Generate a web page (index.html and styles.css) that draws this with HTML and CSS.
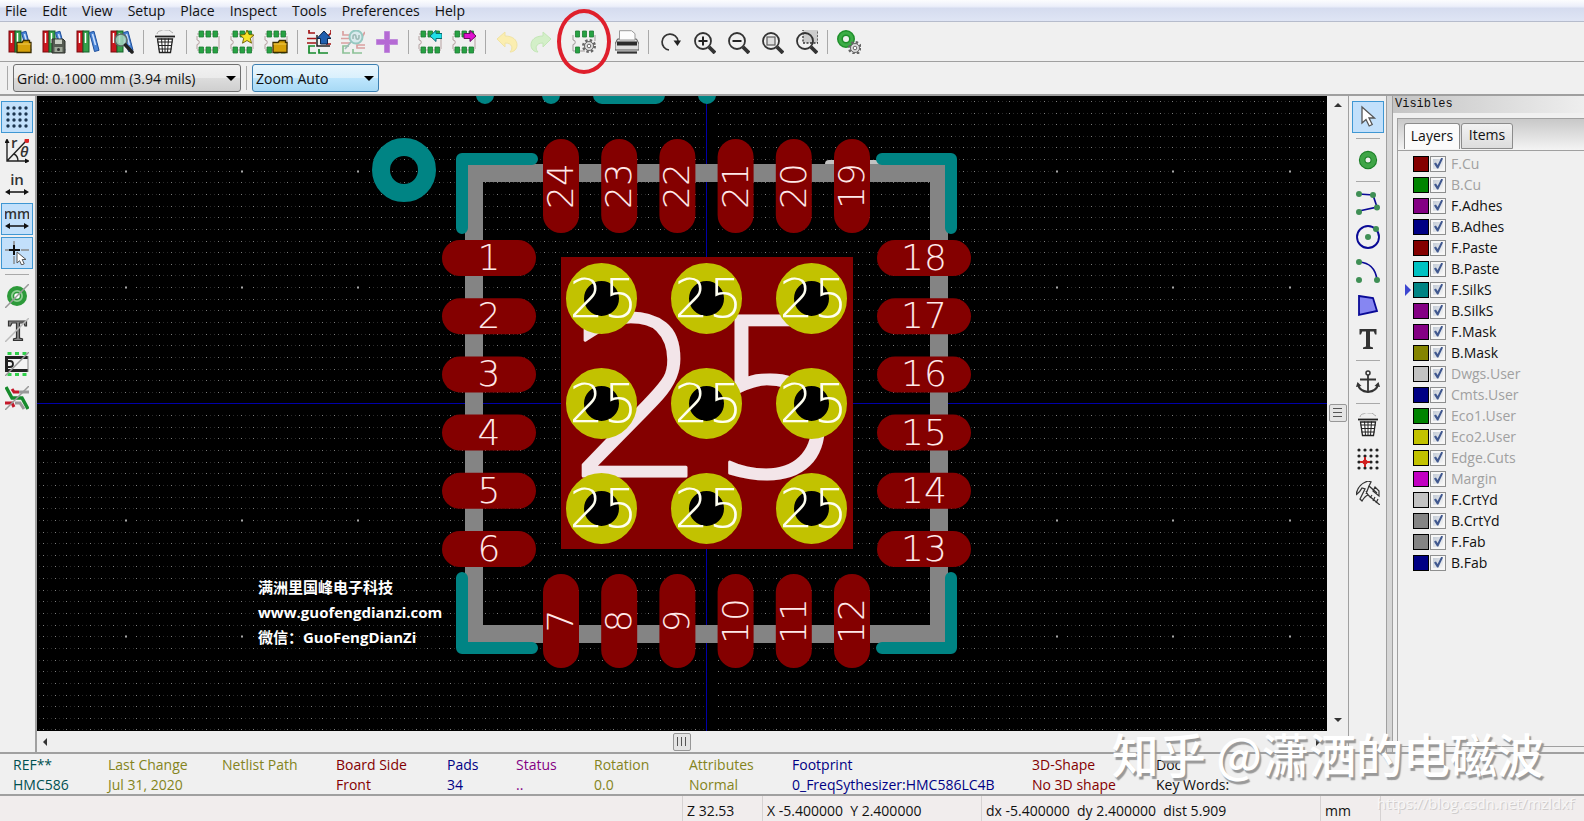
FILE: index.html
```
<!DOCTYPE html>
<html lang="en">
<head>
    <meta charset="UTF-8">
    <meta name="viewport" content="width=device-width, initial-scale=1.0">
    <title>Footprint Editor</title>
    <link rel="stylesheet" href="styles.css">
</head>
<body>
    <!-- Icon shapes -->
    <svg class="sprite" aria-hidden="true">
        <symbol id="books" viewBox="0 0 24 24">
            <rect x="1" y="1" width="6" height="21" fill="#c8171e" stroke="#7a0a0e"/>
            <rect x="7" y="1" width="6" height="21" fill="#35a04a" stroke="#14602a"/>
            <path d="M13.500 2.500l4.500-1.200 5 19-4.500 1.200z" fill="#4a86d8" stroke="#1f4f9c"/>
            <path d="M3.500 3v10M9.500 3v10" stroke="#fff" stroke-width="1.500"/>
            <path d="M16.500 4l3 11" stroke="#cfe2ff" stroke-width="1.500"/>
        </symbol>
        <symbol id="folder" viewBox="0 0 24 24">
            <path d="M9 12.500h5l1.500-2h6v2h1.500v10H9z" fill="#d6a10a" stroke="#3a2c00" stroke-width="1.300"/>
            <path d="M9.500 14h13" stroke="#f0cb55"/>
        </symbol>
        <symbol id="lib-open" viewBox="0 0 24 24"><use href="#books"/><use href="#folder"/></symbol>
        <symbol id="lib-save" viewBox="0 0 24 24">
            <use href="#books"/>
            <path d="M10 9h11l2 2v12H10z" fill="#555b52" stroke="#2c302a"/>
            <rect x="13" y="9.500" width="7" height="4.500" fill="#c9cfc4"/>
            <rect x="12.500" y="17" width="8" height="5" fill="#9fa89a"/>
            <circle cx="16.500" cy="19.500" r="1.500" fill="#333"/>
        </symbol>
        <symbol id="lib-view" viewBox="0 0 24 24">
            <use href="#books"/>
            <circle cx="11" cy="10" r="6" fill="#a5d5c2" fill-opacity=".85" stroke="#5c6b68" stroke-width="1.600"/>
            <path d="M15.500 15l6.500 7" stroke="#222" stroke-width="3.500" stroke-linecap="round"/>
        </symbol>
        <symbol id="trash" viewBox="0 0 24 24">
            <path d="M4 4c1-4 4-2.500 5-4 2-1 3 .5 5 0 3-.5 3 1.500 6 3" fill="none" stroke="#aaa"/>
            <path d="M2 6.500h20" stroke="#222" stroke-width="1.800"/>
            <path d="M4.500 9l2 13.500h11L19.500 9z" fill="#fff" stroke="#222" stroke-width="1.300"/>
            <path d="M8.500 8.500l1 14M12 8.500v14M15.500 8.500l-1 14M4.500 12h15M5 15.500h14M5.500 19h13" stroke="#222"/>
        </symbol>
        <symbol id="chip" viewBox="0 0 24 24">
            <path d="M1 6v4a2 2 0 0 1 0 4.500V19M23 6v13M1 4h22M1 20h22" fill="none" stroke="#b5a0a0"/>
            <path d="M3 1h4.500v6H3zM10 1h4.500v6H10zM17 1h4.500v6H17zM3 17h4.500v6H3zM10 17h4.500v6H10zM17 17h4.500v6H17z" fill="#27a243" stroke="#1d7c34" stroke-width=".8"/>
        </symbol>
        <symbol id="chip-new" viewBox="0 0 24 24">
            <use href="#chip"/>
            <path d="M17 0l2 4.500 5 .5-3.700 3.300 1.200 4.900L17 10.500l-4.500 2.700 1.200-4.900L10 5l5-.5z" fill="#f7e328" stroke="#6c6000" stroke-width=".9"/>
        </symbol>
        <symbol id="chip-open" viewBox="0 0 24 24"><use href="#chip"/><use href="#folder"/></symbol>
        <symbol id="netlist" viewBox="0 0 24 24">
            <path d="M2 -1v4h6M0 8.500h9M0 13h9M24 -1v4l-3 3M24 14h-5" fill="none" stroke="#a31515" stroke-width="1.700"/>
            <path d="M8 16H2v7h7M12 19v4h9" fill="none" stroke="#168a2c" stroke-width="1.700"/>
            <path d="M10 5v11h13" fill="none" stroke="#222" stroke-width="1.500"/>
            <path d="M17 1l7 7.500h-3.500V14h-7V8.500H10z" fill="#1f5fae" stroke="#0b2447"/>
        </symbol>
        <symbol id="netlist-dim" viewBox="0 0 24 24">
            <g opacity=".45">
                <path d="M2 1v4h6M0 8.500h9M0 13h9M24 2l-3 5M24 15h-8v3h8" fill="none" stroke="#c04040" stroke-width="1.700"/>
                <path d="M8 16H2v7h7M12 19v4h9" fill="none" stroke="#168a2c" stroke-width="1.700"/>
                <circle cx="15" cy="7" r="6.500" fill="#bfe3ea" stroke="#2a9a8a" stroke-width="2"/>
                <path d="M12 9V7c0-3 3-3 3 0s3 3 3 0V5M10 12l-6 7" fill="none" stroke="#3a7a70" stroke-width="1.600"/>
            </g>
        </symbol>
        <symbol id="plus" viewBox="0 0 24 24">
            <path d="M9.500 1.500h5v8h8v5h-8v8h-5v-8h-8v-5h8z" fill="#b56ad4" stroke="#c08bdb"/>
        </symbol>
        <symbol id="chip-in" viewBox="0 0 24 24">
            <use href="#chip"/>
            <path d="M12 6l6-5.500V3.500h6v5h-6v3z" fill="#20e0e8" stroke="#0a6a70"/>
        </symbol>
        <symbol id="chip-out" viewBox="0 0 24 24">
            <use href="#chip"/>
            <path d="M24 6l-6-5.500V3.500h-6v5h6v3z" fill="#e012d0" stroke="#6a0a60"/>
        </symbol>
        <symbol id="undo" viewBox="0 0 24 24">
            <path d="M2 9l8-7v4c8 0 12 4 12 9 0 4-3 7-7 7 3-3 3-9-5-9v4z" fill="#fbeeb0" stroke="#f0e3a4"/>
        </symbol>
        <symbol id="redo" viewBox="0 0 24 24">
            <path d="M22 9l-8-7v4C6 6 2 10 2 15c0 4 3 7 7 7-3-3-3-9 5-9v4z" fill="#d3efc8" stroke="#c3e6b6"/>
        </symbol>
        <symbol id="gear" viewBox="0 0 24 24">
            <circle cx="17" cy="16" r="5.500" fill="none" stroke="#666" stroke-width="3" stroke-dasharray="2.300 2.020"/>
            <circle cx="17" cy="16" r="4.500" fill="#ddd" stroke="#666"/>
            <circle cx="17" cy="16" r="1.800" fill="#fff" stroke="#666"/>
        </symbol>
        <symbol id="chip-gear" viewBox="0 0 24 24">
            <path d="M1 5v5a2 2 0 0 1 0 4.500V21M23 5v6M1 21h12" fill="none" stroke="#a09a9a"/>
            <path d="M3.500 1h4v6h-4zM10.500 1h4v6h-4zM17.500 1h4v6h-4zM3.500 17h4v6h-4z" fill="#27a243" stroke="#1d7c34" stroke-width=".8"/>
            <use href="#gear"/>
        </symbol>
        <symbol id="print" viewBox="0 0 24 24">
            <path d="M2.500 9h19l2.500 5v6H0v-6z" fill="#ddd" stroke="#555"/>
            <path d="M4.500 10V.7h12l3.500 3V10z" fill="#fdfdfd" stroke="#999"/>
            <rect x="2" y="11.500" width="20" height="4" fill="#2b2b2b"/>
            <path d="M2 22.500h20" stroke="#333" stroke-width="2.200"/>
        </symbol>
        <symbol id="refresh" viewBox="0 0 24 24">
            <path d="M11 20a8 8 0 1 1 9-9" fill="none" stroke="#333" stroke-width="1.700"/>
            <path d="M15.500 10.500H23L19.500 16z" fill="#222"/>
        </symbol>
        <symbol id="lens" viewBox="0 0 24 24">
            <circle cx="11" cy="11" r="8" fill="none" stroke="#333" stroke-width="1.800"/>
            <path d="M17 17l6 6" stroke="#333" stroke-width="3.800"/>
        </symbol>
        <symbol id="zoom-in" viewBox="0 0 24 24"><use href="#lens"/><path d="M6.500 11h9M11 6.500v9" stroke="#222" stroke-width="2"/></symbol>
        <symbol id="zoom-out" viewBox="0 0 24 24"><use href="#lens"/><path d="M6.500 11h9" stroke="#222" stroke-width="2"/></symbol>
        <symbol id="zoom-fit" viewBox="0 0 24 24"><use href="#lens"/><rect x="7" y="7" width="8" height="8" fill="#ddd" stroke="#666" stroke-width="1.300"/></symbol>
        <symbol id="zoom-area" viewBox="0 0 24 24">
            <rect x="9" y="-1" width="15" height="14" fill="#ccc" stroke="#333" stroke-dasharray="2 1.500" stroke-width="1.300"/>
            <use href="#lens"/>
        </symbol>
        <symbol id="pad-gear" viewBox="0 0 24 24">
            <circle cx="9" cy="9" r="6" fill="none" stroke="#1f8f2b" stroke-width="6"/>
            <circle cx="9" cy="9" r="6" fill="none" stroke="#3cad46" stroke-width="3"/>
            <use href="#gear" x="1" y="2"/>
        </symbol>
        <symbol id="grid" viewBox="0 0 24 24">
            <path d="M3 3h20M3 9h20M3 15h20M3 21h20" stroke="#1c3550" stroke-width="3.400" stroke-linecap="round" stroke-dasharray="0 6"/>
        </symbol>
        <symbol id="polar" viewBox="0 0 24 24">
            <path d="M2 2v20h20M2 22L21 2M9 15q4 2 4 7" fill="none" stroke="#222" stroke-width="1.400"/>
            <path d="M2 -1l-2.500 5h5zM25 22l-5-2.500v5z" fill="#111"/>
            <circle cx="22" cy="1.500" r="2.500" fill="#d22"/>
            <text x="6" y="9" class="icon-text" font-size="15">r</text>
            <text x="15" y="18" class="icon-text italic" font-size="15">θ</text>
        </symbol>
        <symbol id="arrows" viewBox="0 0 24 24">
            <path d="M2 19h20" stroke="currentColor" stroke-width="1.500"/>
            <path d="M0 19l5-3v6zM24 19l-5-3v6z" fill="currentColor"/>
        </symbol>
        <symbol id="inch" viewBox="0 0 24 24"><use href="#arrows"/><text x="12" y="12" text-anchor="middle" class="icon-text" font-size="15">in</text></symbol>
        <symbol id="mm" viewBox="0 0 24 24"><use href="#arrows"/><text x="12" y="12" text-anchor="middle" class="icon-text" font-size="14">mm</text></symbol>
        <symbol id="cursor" viewBox="0 0 24 24">
            <path d="M9 0v5M9 15v8M0 9h4M16 9h8" stroke="#888" stroke-width="1.400"/>
            <path d="M9 4v10M4 9h11" stroke="#111" stroke-width="2"/>
            <path d="M12 11v11l2.600-2.300 2 4.300 2.600-1.200-2-4.300H21z" fill="#fff" stroke="#555"/>
        </symbol>
        <symbol id="pad" viewBox="0 0 24 24">
            <circle cx="12" cy="12" r="7" fill="none" stroke="#1c7f28" stroke-width="8"/>
            <circle cx="12" cy="12" r="7" fill="none" stroke="#3fa547" stroke-width="5.500"/>
        </symbol>
        <symbol id="pad-off" viewBox="0 0 24 24">
            <circle cx="12" cy="12" r="8" fill="#8fcf93" stroke="#2d9a3a" stroke-width="4"/>
            <circle cx="12" cy="12" r="3.500" fill="#fff" stroke="#2d9a3a" stroke-width="1.500"/>
            <path d="M0 24L24 0" stroke="#999" stroke-width="1.500"/>
        </symbol>
        <symbol id="text-off" viewBox="0 0 24 24">
            <path d="M3.500 3h18v5h-1.500l-1-3h-4.500v15l3 1v1.500H8.500V21l3-1V5H7L5.500 8h-2z" fill="#888" stroke="#333" stroke-width="1.200"/>
            <path d="M0 24L24 0" stroke="#bbb" stroke-width="1.500"/>
        </symbol>
        <symbol id="mod-off" viewBox="0 0 24 24">
            <path d="M2.500 1h4M10 1h4M17.500 1h4M2.500 23h4M10 23h4M17.500 23h4" stroke="#2fd04a" stroke-width="4"/>
            <path d="M23 5.500H1.500v13H23" fill="#f4f4f4" stroke="#222" stroke-width="3"/>
            <path d="M23 4v16" stroke="#888"/>
            <path d="M3 9h2q3 0 3 3t-3 3H3" fill="none" stroke="#222" stroke-width="1.800"/>
            <path d="M0 24L24 0" stroke="#999" stroke-width="1.500"/>
        </symbol>
        <symbol id="track-off" viewBox="0 0 24 24">
            <path d="M7 3l2 3h5M0 17h7l2 4" fill="none" stroke="#c4182a" stroke-width="3"/>
            <path d="M1 1l6 11h10l6 11" fill="none" stroke="#168a2c" stroke-width="3.400"/>
            <path d="M14 6h10M10 17h5l4 6" fill="none" stroke="#999" stroke-width="3"/>
            <path d="M0 24L24 0" stroke="#999" stroke-width="1.500"/>
        </symbol>
        <symbol id="select" viewBox="0 0 24 24">
            <path d="M6 2v16l4-3.500 3.200 6.500 3-1.500L13 13h5.500z" fill="#fff" stroke="#555" stroke-width="1.300"/>
        </symbol>
        <symbol id="line" viewBox="0 0 24 24">
            <path d="M3 3l14 1 4 12-18 4" fill="none" stroke="#0a0a96" stroke-width="1.700"/>
            <g fill="#3f8f55"><circle cx="3" cy="3" r="3"/><circle cx="17" cy="4" r="3"/><circle cx="21" cy="16.500" r="3"/><circle cx="3" cy="21" r="3"/></g>
        </symbol>
        <symbol id="circle" viewBox="0 0 24 24">
            <circle cx="12" cy="12" r="11" fill="none" stroke="#0a0a96" stroke-width="1.900"/>
            <g fill="#3f8f55"><circle cx="12" cy="12" r="3"/><circle cx="20" cy="4" r="3"/></g>
        </symbol>
        <symbol id="arc" viewBox="0 0 24 24">
            <path d="M3 3q16 1 18 18" fill="none" stroke="#0a0a96" stroke-width="1.700"/>
            <g fill="#3f8f55"><circle cx="3" cy="3" r="3"/><circle cx="21" cy="21" r="3"/><circle cx="3" cy="21" r="3"/></g>
        </symbol>
        <symbol id="poly" viewBox="0 0 24 24">
            <path d="M3 3l14 2 4 13-18 4z" fill="#8686f2" stroke="#0a0a96" stroke-width="1.800"/>
        </symbol>
        <symbol id="text" viewBox="0 0 24 24">
            <path d="M3.500 2h17v5.500h-1.500l-1.200-3h-3.800v15l3 1V22H7v-1.500l3-1v-15H6.200L5 7.500H3.500z" fill="#333"/>
        </symbol>
        <symbol id="anchor" viewBox="0 0 24 24">
            <circle cx="12" cy="3" r="2" fill="none" stroke="#333" stroke-width="1.500"/>
            <path d="M12 5v16M4 9.500h16" stroke="#333" stroke-width="1.800"/>
            <path d="M2 14q1 7 10 8 9-1 10-8" fill="none" stroke="#333" stroke-width="2"/>
            <path d="M0 17l1.500-5 4 4zM24 17l-1.500-5-4 4z" fill="#333"/>
        </symbol>
        <symbol id="origin" viewBox="0 0 24 24">
            <path d="M3 3h20M3 9h20M3 15h20M3 21h20" stroke="#222" stroke-width="3.200" stroke-linecap="round" stroke-dasharray="0 6"/>
            <path d="M9 10v10M4 15h10" stroke="#d02020" stroke-width="2"/>
            <circle cx="9" cy="15" r="2.500" fill="#d02020"/>
        </symbol>
        <symbol id="measure" viewBox="0 0 24 24">
            <path d="M0 14C1 7 6 2 12 0l3 1-2 4 8 7M0 14q4-3 6-7l3 1-5 10 2 2q3-5 6-6l12 10" fill="none" stroke="#333" stroke-width="1.300"/>
            <path d="M19 6l4 4v5l-6-5zM13 5l-3 8M14 17l2-3M17 20l2-4M20 22l2-4M12 14l-2-4" fill="none" stroke="#333" stroke-width="1.200"/>
        </symbol>
    </svg>

    <nav class="menubar">
        <a href="#">File</a>
        <a href="#">Edit</a>
        <a href="#">View</a>
        <a href="#">Setup</a>
        <a href="#">Place</a>
        <a href="#">Inspect</a>
        <a href="#">Tools</a>
        <a href="#">Preferences</a>
        <a href="#">Help</a>
    </nav>

    <div class="toolbar">
        <button title="Open library"><svg><use href="#lib-open"/></svg></button>
        <button title="Save library"><svg><use href="#lib-save"/></svg></button>
        <button title="Libraries"><svg><use href="#books"/></svg></button>
        <button title="Browse library"><svg><use href="#lib-view"/></svg></button>
        <span class="sep"></span>
        <button title="Delete footprint"><svg><use href="#trash"/></svg></button>
        <span class="sep"></span>
        <button title="New footprint"><svg><use href="#chip"/></svg></button>
        <button title="New footprint wizard"><svg><use href="#chip-new"/></svg></button>
        <button title="Open footprint"><svg><use href="#chip-open"/></svg></button>
        <span class="sep"></span>
        <button title="Load from board"><svg><use href="#netlist"/></svg></button>
        <button title="Update on board" disabled><svg><use href="#netlist-dim"/></svg></button>
        <button title="Insert on board"><svg><use href="#plus"/></svg></button>
        <span class="sep"></span>
        <button title="Import footprint"><svg><use href="#chip-in"/></svg></button>
        <button title="Export footprint"><svg><use href="#chip-out"/></svg></button>
        <span class="sep"></span>
        <button title="Undo" disabled><svg><use href="#undo"/></svg></button>
        <button title="Redo" disabled><svg><use href="#redo"/></svg></button>
        <span class="sep blank"></span>
        <button title="Footprint properties" class="marked"><svg><use href="#chip-gear"/></svg></button>
        <span class="sep blank"></span>
        <button title="Print"><svg><use href="#print"/></svg></button>
        <span class="sep"></span>
        <button title="Refresh"><svg><use href="#refresh"/></svg></button>
        <button title="Zoom in"><svg><use href="#zoom-in"/></svg></button>
        <button title="Zoom out"><svg><use href="#zoom-out"/></svg></button>
        <button title="Zoom to fit"><svg><use href="#zoom-fit"/></svg></button>
        <button title="Zoom to selection"><svg><use href="#zoom-area"/></svg></button>
        <span class="sep"></span>
        <button title="Default pad properties"><svg><use href="#pad-gear"/></svg></button>
    </div>

    <div class="options">
        <span class="sep"></span>
        <label class="combo combo-grid">
            <select aria-label="Grid"><option>Grid: 0.1000 mm (3.94 mils)</option></select>
        </label>
        <span class="sep"></span>
        <label class="combo combo-zoom">
            <select aria-label="Zoom"><option>Zoom Auto</option></select>
        </label>
    </div>

    <main class="workspace">
        <div class="sidebar sidebar-left">
            <button title="Show grid" class="on"><svg><use href="#grid"/></svg></button>
            <button title="Polar coordinates"><svg><use href="#polar"/></svg></button>
            <button title="Inches"><svg><use href="#inch"/></svg></button>
            <button title="Millimeters" class="on"><svg><use href="#mm"/></svg></button>
            <button title="Cursor shape" class="on"><svg><use href="#cursor"/></svg></button>
            <span class="rule"></span>
            <button title="Sketch pads"><svg><use href="#pad-off"/></svg></button>
            <button title="Sketch texts"><svg><use href="#text-off"/></svg></button>
            <button title="Sketch edges"><svg><use href="#mod-off"/></svg></button>
            <button title="High contrast"><svg><use href="#track-off"/></svg></button>
        </div>

        <div class="board">
            <div class="canvas">
                <svg id="canvas" viewBox="37 96 1290 635" preserveAspectRatio="xMidYMid slice">
                    <path id="gridDots" stroke="#7c7c7c"/>
                    <path id="gridFaint" stroke="#2a2a2a"/>
                    <path id="gridMajor" stroke="#a8a8a8" stroke-width="2"/>
                    <path d="M37 403.500H1327M706.500 96V731" stroke="#0000a8"/>
                    <g stroke="#008484" fill="none" stroke-linecap="round">
                        <path d="M485 95h0M551 95h0M602 95h54M707 95h0" stroke-width="18"/>
                        <circle cx="404" cy="170" r="23" stroke-width="18"/>
                    </g>
                    <path d="M829 164h46" stroke="#c2c2c2" stroke-width="8" stroke-linecap="round"/>
                    <rect x="474" y="173" width="465" height="461" fill="none" stroke="#848484" stroke-width="18"/>
                    <g stroke="#008484" stroke-width="12" fill="none" stroke-linecap="round" stroke-linejoin="round">
                        <path d="M462 228V159H532M951 228V159H882M462 578V648H532M951 578V648H882"/>
                    </g>
                    <rect x="561" y="257" width="292" height="292" fill="#840000"/>
                    <text class="pad-number big" x="708" y="476">25</text>
                    <g id="pads"></g>
                </svg>
                <div class="contact">
                    <p>满洲里国峰电子科技</p>
                    <p>www.guofengdianzi.com</p>
                    <p>微信：GuoFengDianZi</p>
                </div>
            </div>
            <div class="scroll scroll-y"><i class="up"></i><b></b><i class="down"></i></div>
            <div class="scroll scroll-x"><i class="left"></i><b></b><i class="right"></i></div>
        </div>

        <div class="sidebar sidebar-right">
            <button title="Select" class="on"><svg><use href="#select"/></svg></button>
            <span class="rule"></span>
            <button title="Add pad"><svg class="small"><use href="#pad"/></svg></button>
            <span class="rule"></span>
            <button title="Add line"><svg><use href="#line"/></svg></button>
            <button title="Add circle"><svg><use href="#circle"/></svg></button>
            <button title="Add arc"><svg><use href="#arc"/></svg></button>
            <button title="Add polygon"><svg><use href="#poly"/></svg></button>
            <button title="Add text"><svg><use href="#text"/></svg></button>
            <span class="rule"></span>
            <button title="Set anchor"><svg><use href="#anchor"/></svg></button>
            <span class="rule"></span>
            <button title="Delete"><svg><use href="#trash"/></svg></button>
            <button title="Grid origin"><svg><use href="#origin"/></svg></button>
            <button title="Measure"><svg><use href="#measure"/></svg></button>
        </div>

        <aside class="visibles">
            <h2>Visibles</h2>
            <div class="notebook">
                <div class="tabs">
                    <button class="tab active">Layers</button>
                    <button class="tab">Items</button>
                </div>
                <ul id="layers" class="layers"></ul>
            </div>
        </aside>
    </main>

    <section class="info">
        <div class="ref"><span>REF**</span><span>HMC586</span></div>
        <div class="olive"><span>Last Change</span><span>Jul 31, 2020</span></div>
        <div class="olive"><span>Netlist Path</span></div>
        <div class="red"><span>Board Side</span><span>Front</span></div>
        <div class="blue"><span>Pads</span><span>34</span></div>
        <div class="purple"><span>Status</span><span>..</span></div>
        <div class="olive"><span>Rotation</span><span>0.0</span></div>
        <div class="olive"><span>Attributes</span><span>Normal</span></div>
        <div class="blue"><span>Footprint</span><span>0_FreqSythesizer:HMC586LC4B</span></div>
        <div class="red"><span>3D-Shape</span><span>No 3D shape</span></div>
        <div><span>Doc:</span><span>Key Words:</span></div>
    </section>

    <footer class="status">
        <span></span>
        <span>Z 32.53</span>
        <span>X -5.400000&nbsp; Y 2.400000</span>
        <span>dx -5.400000&nbsp; dy 2.400000&nbsp; dist 5.909</span>
        <span>mm</span>
        <span></span>
    </footer>

    <div class="watermark">知乎 @潇洒的电磁波</div>
    <div class="watermark-url">https://blog.csdn.net/mzldxf</div>

    <script>
        const layers = [
            ['F.Cu', '#840000', true],
            ['B.Cu', '#008400', true],
            ['F.Adhes', '#840084'],
            ['B.Adhes', '#000084'],
            ['F.Paste', '#840000'],
            ['B.Paste', '#00c2c2'],
            ['F.SilkS', '#008484'],
            ['B.SilkS', '#840084'],
            ['F.Mask', '#840084'],
            ['B.Mask', '#848400'],
            ['Dwgs.User', '#c2c2c2', true],
            ['Cmts.User', '#000084', true],
            ['Eco1.User', '#008400', true],
            ['Eco2.User', '#c2c200', true],
            ['Edge.Cuts', '#c2c200', true],
            ['Margin', '#c200c2', true],
            ['F.CrtYd', '#c2c2c2'],
            ['B.CrtYd', '#848484'],
            ['F.Fab', '#848484'],
            ['B.Fab', '#000084']
        ];

        document.getElementById('layers').innerHTML = layers.map(([name, color, dim]) => `
            <li class="${dim ? 'dim' : ''}${name === 'F.SilkS' ? 'current' : ''}">
                <span class="swatch" style="background:${color}"></span>
                <label><input type="checkbox" checked>${name}</label>
            </li>`).join('');

        // Board origin and pad pitch in screen units
        const originX = 706.5;
        const originY = 403.5;
        const pitch = 58.2;
        const step = 11.64;

        function drawGrid() {
            let dots = '';
            let faint = '';
            let major = '';
            for (let i = -58; i <= 54; i++) {
                for (let j = -27; j <= 28; j++) {
                    // the axes have no dots of their own
                    if (i === 0 || j === 0) continue;
                    const x = Math.round(originX + i * step);
                    const y = Math.round(originY + j * step) + 0.5;
                    if (i % 10 === 0 && j % 10 === 0) {
                        major += `M${x} ${y}h2`;
                    } else {
                        dots += `M${x} ${y}h1`;
                        faint += `M${x + 4} ${y}h1M${x + 8} ${y}h1`;
                    }
                }
            }
            document.getElementById('gridDots').setAttribute('d', dots);
            document.getElementById('gridFaint').setAttribute('d', faint);
            document.getElementById('gridMajor').setAttribute('d', major);
        }

        function sidePad(x, y, number) {
            return `<rect x="${x - 47}" y="${y - 18}" width="94" height="36" rx="18" fill="#840000"/>
                <text class="pad-number" x="${x}" y="${y + 12}">${number}</text>`;
        }

        function endPad(x, y, number) {
            return `<rect x="${x - 18}" y="${y - 47}" width="36" height="94" rx="18" fill="#840000"/>
                <text class="pad-number" transform="translate(${x + 12} ${y}) rotate(-90)">${number}</text>`;
        }

        function via(x, y) {
            return `<circle cx="${x}" cy="${y}" r="26.500" fill="#000" stroke="#c2c200" stroke-width="18"/>
                <text class="pad-number via" x="${x + 2}" y="${y + 18}">25</text>`;
        }

        let pads = '';
        for (let i = 0; i < 6; i++) {
            const offset = (i - 2.5) * pitch;
            pads += sidePad(489, originY + offset, i + 1);
            pads += sidePad(924, originY + offset, 18 - i);
            pads += endPad(originX + offset, 186, 24 - i);
            pads += endPad(originX + offset, 621, i + 7);
        }
        for (const dy of [-105, 0, 105]) {
            for (const dx of [-105, 0, 105]) {
                pads += via(originX + dx, originY + dy);
            }
        }
        drawGrid();
        document.getElementById('pads').innerHTML = pads;
    </script>
</body>
</html>
```

FILE: styles.css
```
*, *::before, *::after {
    box-sizing: border-box;
}
body {
    margin: 0;
    min-height: 100vh;
    display: grid;
    grid-template-rows: 22px 40px 34px 1fr 44px 25px;
    font-family: "Open Sans", "Noto Sans CJK SC", sans-serif;
    font-size: 14px;
    color: #111;
    background: #f0f0f0;
    overflow: hidden;
}
button {
    padding: 0;
    border: none;
    background: none;
    font: inherit;
    color: inherit;
}
.sprite {
    display: none;
}
.icon-text {
    font-family: "Open Sans", sans-serif;
    font-weight: 600;
    fill: #333;
}
.italic {
    font-style: italic;
}

/* Menu and toolbars */
.menubar {
    display: flex;
    align-items: center;
    gap: 15px;
    padding: 0 5px;
    background: linear-gradient(#fcfdfe, #eceffa 30%, #d5dcef 40%, #dfe5f5);
    border-bottom: 1px solid #b6bccc;
}
.menubar a {
    color: #111;
    text-decoration: none;
}
.toolbar {
    display: flex;
    align-items: center;
    gap: 2px;
    padding: 1px 4px 0;
    border-bottom: 1px solid #a0a0a0;
}
.toolbar button, .sidebar button {
    display: flex;
    align-items: center;
    justify-content: center;
    flex: none;
    width: 32px;
    height: 32px;
}
.toolbar svg, .sidebar svg {
    width: 24px;
    height: 24px;
    overflow: visible;
}
.sep {
    width: 1px;
    height: 24px;
    margin: 0 3px;
    background: #a9a9a9;
}
.blank {
    background: none;
}
.marked {
    position: relative;
}
.marked::after {
    content: "";
    position: absolute;
    left: -11px;
    top: -17px;
    width: 54px;
    height: 65px;
    border: 4px solid #df1f2c;
    border-radius: 50%;
}
.options {
    display: flex;
    align-items: center;
    gap: 2px;
    padding: 0 4px;
    border-bottom: 2px solid #9f9f9f;
}
.combo {
    position: relative;
}
.combo::after {
    content: "";
    position: absolute;
    right: 5px;
    top: 12px;
    border: 5px solid transparent;
    border-top-color: #000;
    border-bottom: none;
}
.combo select {
    appearance: none;
    width: 100%;
    height: 28px;
    padding: 0 3px;
    font: inherit;
    color: #111;
    border: 1px solid #707070;
    border-radius: 3px;
    background: linear-gradient(#f2f2f2, #ebebeb 50%, #dddddd 50%, #cfcfcf);
}
.combo-grid {
    width: 228px;
}
.combo-zoom {
    width: 127px;
}
.combo-zoom select {
    border-color: #3c7fb1;
    background: linear-gradient(#eaf6fd, #d9f0fc 50%, #bee6fd 50%, #a7d9f5);
}

/* Work area */
.workspace {
    display: grid;
    grid-template-columns: 37px 1fr 39px 197px;
    min-height: 0;
}
.sidebar {
    display: flex;
    flex-direction: column;
    gap: 2px;
    padding: 5px 1px;
}
.sidebar-left {
    border-right: 2px solid #a0a0a0;
}
.sidebar-right {
    padding-left: 3px;
    border-left: 1px solid #a0a0a0;
}
.sidebar .on {
    background: #c2e0fb;
    border: 1px solid #3f97d3;
}
.sidebar .small {
    width: 20px;
    height: 20px;
}
.rule {
    width: 24px;
    height: 1px;
    margin: 3px 4px;
    background: #a9a9a9;
}
.board {
    display: grid;
    grid-template-columns: 1fr 21px;
    grid-template-rows: 1fr 21px;
    min-width: 0;
    min-height: 0;
}
.canvas {
    position: relative;
    overflow: hidden;
    background: #000;
}
.canvas svg {
    position: absolute;
    width: 100%;
    height: 100%;
}
.contact {
    position: absolute;
    left: 221px;
    top: 479px;
    color: #fff;
    font-size: 15px;
    font-weight: 700;
    line-height: 25px;
}
.contact p {
    margin: 0;
}
.pad-number {
    font-family: "DejaVu Sans", sans-serif;
    font-weight: 200;
    font-size: 36px;
    text-anchor: middle;
    fill: #ffe8e8;
}
.via {
    font-size: 54px;
    fill: #fffff0;
}
.big {
    font-size: 220px;
    fill: #f3e5e9;
    stroke: #f3e5e9;
    stroke-width: 3px;
    stroke-linejoin: round;
}
.scroll {
    display: flex;
    justify-content: space-between;
    align-items: center;
    background: #efefef;
}
.scroll-y {
    flex-direction: column;
    padding: 7px 0 9px;
}
.scroll-x {
    grid-column: 1 / 3;
    padding: 0 28px 0 6px;
}
.scroll b {
    width: 18px;
    height: 18px;
    border: 1px solid #979797;
    border-radius: 2px;
}
.scroll-y b {
    background: repeating-linear-gradient(#555 0 1px, transparent 1px 4px) center / 9px 9px no-repeat #e4e4e4;
}
.scroll-x b {
    background: repeating-linear-gradient(90deg, #555 0 1px, transparent 1px 4px) center / 9px 9px no-repeat #e4e4e4;
}
.scroll i {
    border: 4px solid transparent;
}
.scroll .up {
    border-top: none;
    border-bottom-color: #333;
}
.scroll .down {
    border-bottom: none;
    border-top-color: #333;
}
.scroll .left {
    border-left: none;
    border-right-color: #333;
}
.scroll .right {
    border-right: none;
    border-left-color: #333;
}

/* Layer panel */
.visibles {
    display: flex;
    flex-direction: column;
    padding-bottom: 5px;
    border-left: 5px solid #d6d6d6;
    box-shadow: inset 1px 0 #a0a0a0, -1px 0 #a0a0a0;
}
.visibles h2 {
    margin: 0 0 5px 1px;
    padding-left: 2px;
    height: 17px;
    font: 12px/16px "Liberation Mono", monospace;
    background: linear-gradient(90deg, #c4c4c4, #eeeeee);
}
.notebook {
    flex: 1;
    margin-left: 5px;
    border: 1px solid #a0a0a0;
    border-right: none;
}
.tabs {
    display: flex;
    gap: 1px;
    height: 32px;
    padding: 4px 6px 1px;
    border-bottom: 1px solid #a0a0a0;
    background: linear-gradient(#c8c8c8, #f4f4f4);
}
.tab {
    width: 52px;
    padding-bottom: 3px;
    border: 1px solid #8c8c8c;
    border-radius: 3px 3px 0 0;
    background: linear-gradient(#f2f2f2, #dddddd);
}
.tab.active {
    width: 56px;
    border-bottom: none;
    background: #fbfbfb;
}
.layers {
    list-style: none;
    margin: 0;
    padding: 2px 0 0 15px;
}
.layers li {
    position: relative;
    display: flex;
    align-items: center;
    height: 21px;
}
.swatch {
    width: 16px;
    height: 16px;
    border: 1px solid #000;
}
.layers label {
    display: flex;
    align-items: center;
    gap: 5px;
}
.layers input {
    appearance: none;
    position: relative;
    width: 16px;
    height: 16px;
    margin: 0 0 0 1px;
    border: 1px solid #8e8f8f;
    background: linear-gradient(135deg, #c3cbd6, #f6f6f6) center / 10px 10px no-repeat #f6f6f6;
}
.layers input:checked::after {
    content: "";
    position: absolute;
    left: 3px;
    top: 1px;
    width: 9px;
    height: 11px;
    background: #40588f;
    clip-path: polygon(0 55%, 22% 45%, 40% 68%, 82% 0, 100% 8%, 48% 100%, 34% 100%);
}
.dim {
    color: #a0a0a0;
}
.current::before {
    content: "";
    position: absolute;
    left: -8px;
    border: 6px solid transparent;
    border-left-color: #3c46d0;
    border-right: none;
}

/* Footprint info and status bar */
.info {
    display: grid;
    grid-template-columns: 95px 114px 114px 111px 69px 78px 95px 103px 240px 124px 1fr;
    padding: 1px 0 0 13px;
    border-top: 2px solid #a0a0a0;
    border-bottom: 2px solid #a0a0a0;
    line-height: 20px;
    white-space: nowrap;
}
.info span {
    display: block;
}
.ref {
    color: #005050;
}
.olive {
    color: #848420;
}
.red {
    color: #840000;
}
.blue {
    color: #000084;
}
.purple {
    color: #840084;
}
.status {
    display: grid;
    grid-template-columns: 682px 80px 219px 339px 60px 1fr;
    background: #f1eded;
    line-height: 29px;
    height: 25px;
    overflow: hidden;
    white-space: nowrap;
}
.status span {
    padding-left: 4px;
    border-left: 1px solid #d6d2d2;
}
.status span:first-child {
    border: none;
}
.watermark {
    position: absolute;
    right: 40px;
    bottom: 36px;
    font: 500 47px/64px "Noto Sans CJK SC", sans-serif;
    color: #fff;
    text-shadow: 2px 3px 1px #999;
}
.watermark-url {
    position: absolute;
    right: 10px;
    bottom: 8px;
    font-size: 15px;
    color: #f7f7f7;
    text-shadow: 1px 1px #cfcccc;
}
```
